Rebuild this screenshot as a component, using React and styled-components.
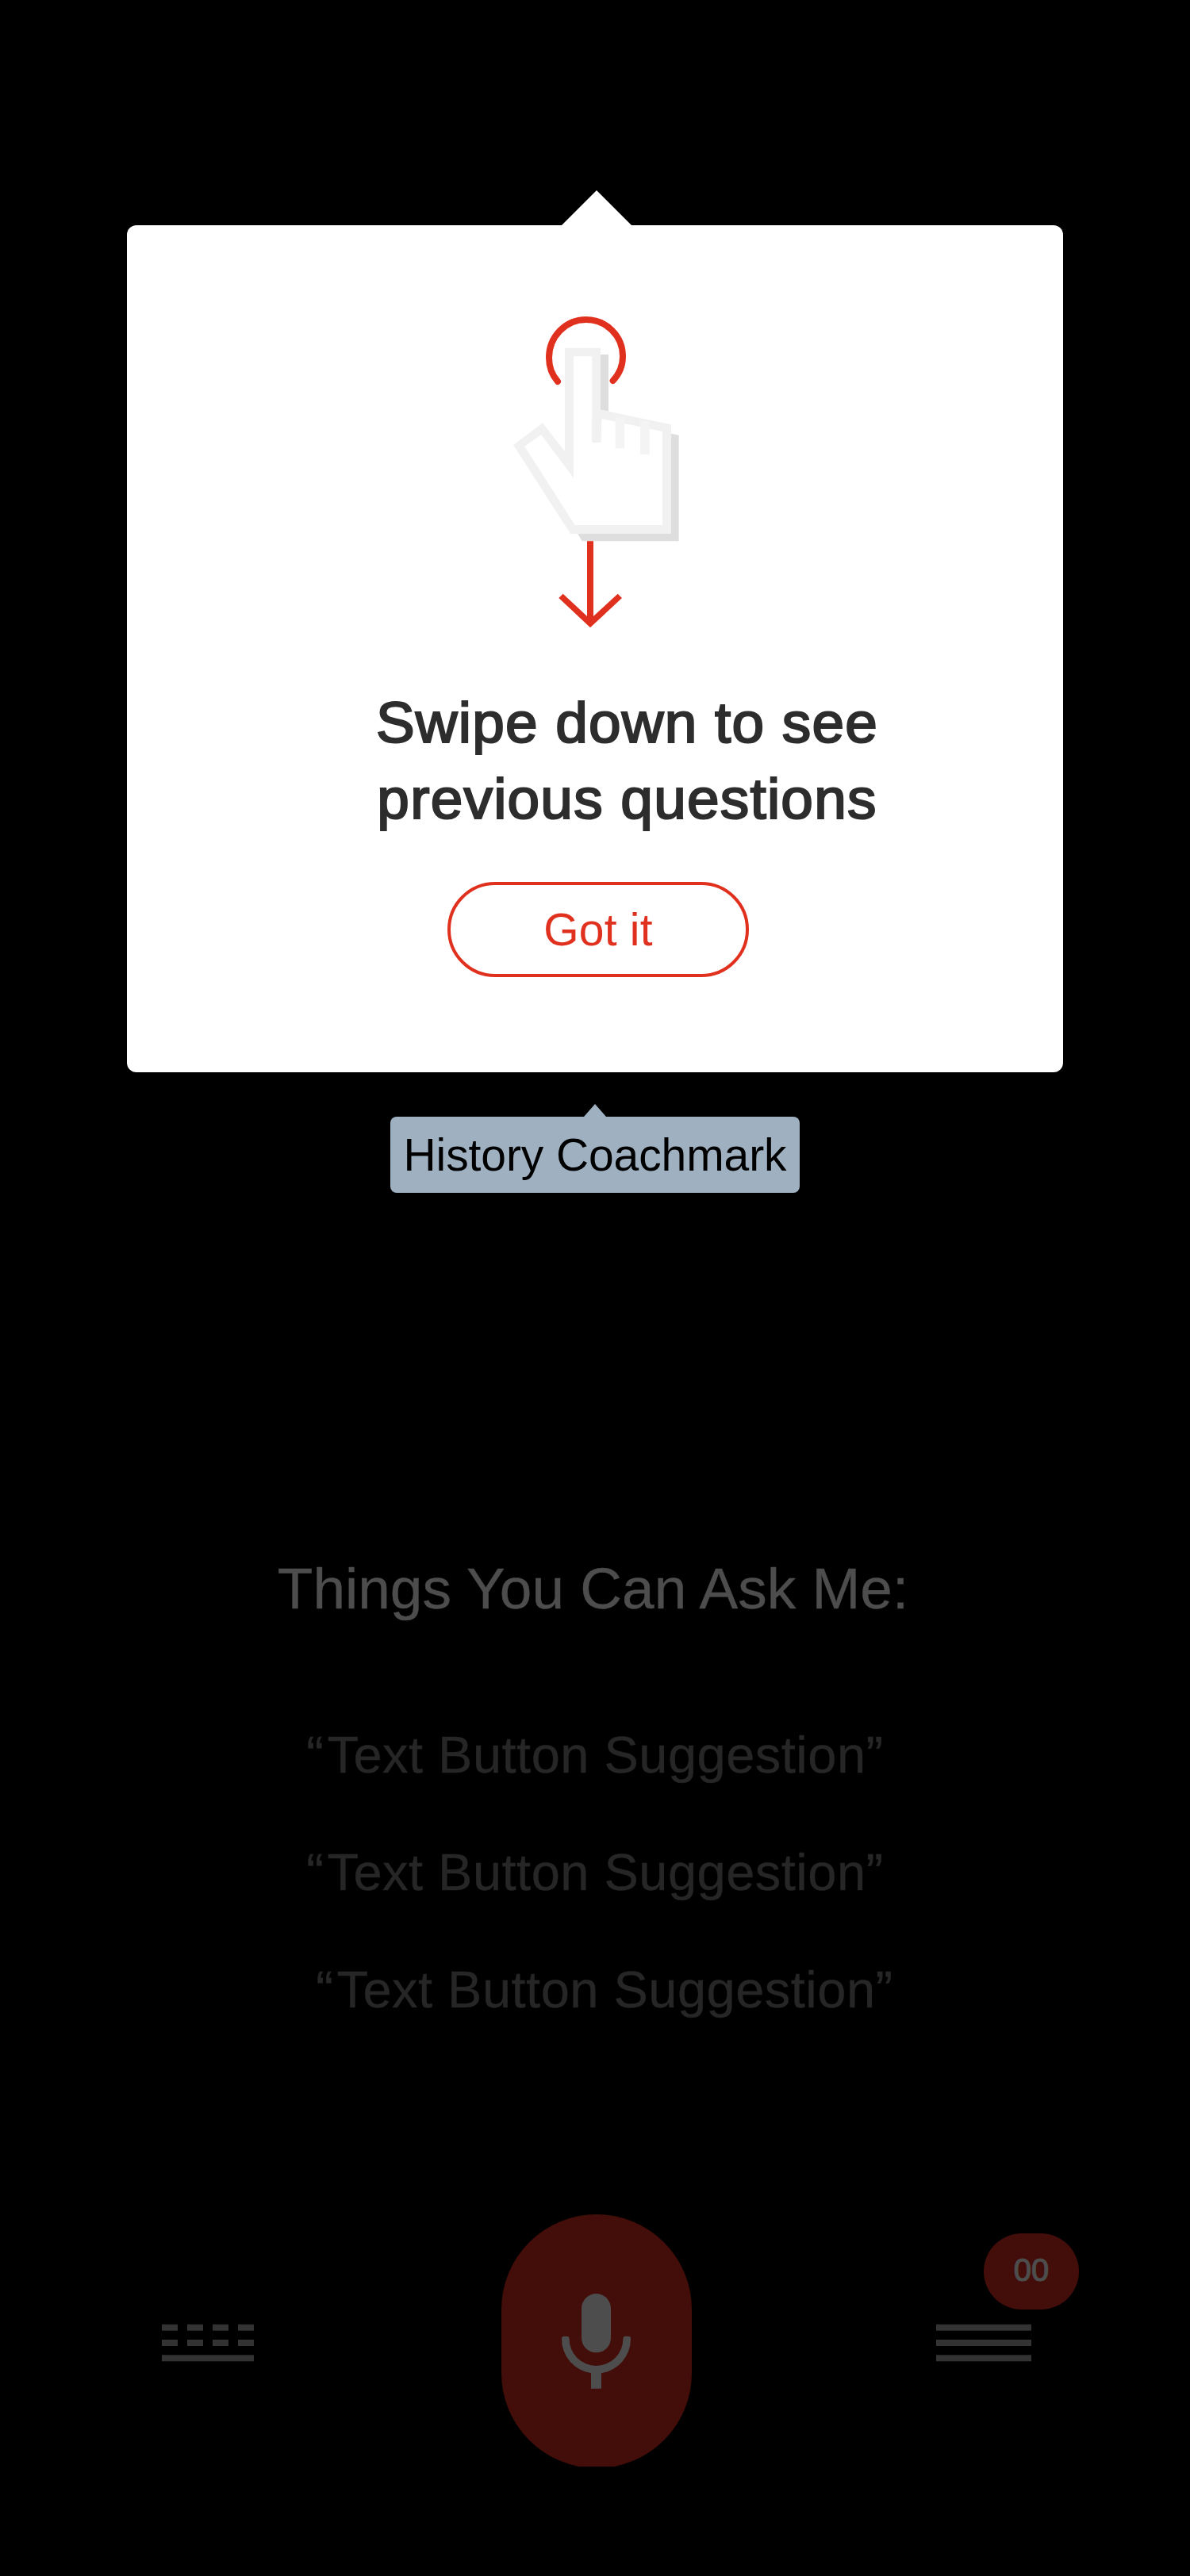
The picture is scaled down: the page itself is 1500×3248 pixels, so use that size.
import React from "react";
import styled, { createGlobalStyle } from "styled-components";

const red = "#e0301e";
const dimRed = "#430e09";

const GlobalStyle = createGlobalStyle`
  body { margin: 0; background: #000; }
  * { box-sizing: border-box; }
`;

const Screen = styled.main`
  width: 1500px;
  height: 3248px;
  padding-top: 240px;
  display: flex;
  flex-direction: column;
  align-items: center;
  background: #000;
  overflow: hidden;
  font-family: "Liberation Sans", Arial, sans-serif;
`;

const Pointer = styled.div`
  flex: none;
  width: ${(p) => p.$width}px;
  height: ${(p) => p.$height}px;
  margin-left: ${(p) => p.$shift || 0}px;
  background: ${(p) => p.$color};
  clip-path: polygon(50% 0, 100% 100%, 0 100%);
`;

const Card = styled.section`
  width: 1180px;
  height: 1068px;
  padding-top: 86px;
  margin-bottom: 40px;
  display: flex;
  flex-direction: column;
  align-items: center;
  background: #fff;
  border-radius: 12px;
`;

const Gesture = styled.svg`
  display: block;
  width: 300px;
  height: 440px;
`;

const Title = styled.h1`
  margin: 53px 0 57px 81px;
  font-size: 73px;
  font-weight: 400;
  line-height: 96px;
  letter-spacing: 1.2px;
  text-align: center;
  color: #2d2d2d;
  -webkit-text-stroke: 2.2px #2d2d2d;
`;

const GotIt = styled.button`
  width: 380px;
  height: 120px;
  margin-left: 8px;
  padding: 0;
  border: 4px solid ${red};
  border-radius: 60px;
  background: transparent;
  color: ${red};
  font-family: inherit;
  font-size: 57px;
  letter-spacing: 0.2px;
`;

const Label = styled.div`
  width: 516px;
  height: 96px;
  line-height: 96px;
  border-radius: 8px;
  background: #9fb1c1;
  color: #000;
  font-size: 57px;
  letter-spacing: -0.1px;
  text-align: center;
  white-space: nowrap;
`;

const Prompt = styled.h2`
  margin: 451px 5px 122px 0;
  font-size: 73px;
  font-weight: 400;
  line-height: 96px;
  color: #4d4d4d;
  white-space: nowrap;
  -webkit-text-stroke: 0.4px #4d4d4d;
`;

const Suggestions = styled.div`
  display: flex;
  flex-direction: column;
  align-items: center;
  gap: 68px;
  margin-bottom: 243px;
`;

const SuggestionLine = styled.div`
  padding-left: ${(p) => (p.$indented ? 24 : 0)}px;
  font-size: 65px;
  line-height: 80px;
  letter-spacing: 0.48px;
  color: #262626;
  white-space: nowrap;
  -webkit-text-stroke: 0.4px #262626;
`;

const OpenQuote = styled.span`
  margin-right: 4px;
`;

const Dock = styled.footer`
  align-self: stretch;
  display: flex;
  padding-left: 204px;
`;

const Keyboard = styled.svg`
  width: 116px;
  height: 60px;
  margin: 132px 312px 0 0;
`;

const MicButton = styled.div`
  width: 240px;
  height: 318.4px;
  margin-right: 308px;
  overflow: hidden;
`;

const MicPill = styled.div`
  height: 320px;
  border-radius: 120px;
  background: ${dimRed};
`;

const Menu = styled.div`
  position: relative;
  width: 120px;
  height: 320px;
  padding-top: 132px;
`;

const Lines = styled.svg`
  display: block;
  width: 120px;
  height: 60px;
`;

const Badge = styled.div`
  position: absolute;
  left: 60px;
  top: 24px;
  width: 120px;
  height: 96px;
  border-radius: 48px;
  background: ${dimRed};
  color: #4d4d4d;
  font-size: 40px;
  line-height: 93px;
  text-align: center;
  -webkit-text-stroke: 1.2px #4d4d4d;
`;

const rows = [6.7, 26, 45.3];

function Suggestion({ indented, children }) {
  return (
    <SuggestionLine $indented={indented}>
      <OpenQuote>“</OpenQuote>
      {children}”
    </SuggestionLine>
  );
}

export default function App() {
  return (
    <>
      <GlobalStyle />
      <Screen>
        <Pointer $width={88} $height={44} $shift={4} $color="#fff" />
        <Card>
          <Gesture viewBox="0 0 900 1320">
            <path
              d="M309 333C288 309 276 277 276 243C276 164 338 99 416 99C493 99 555 161 555 238C555 273 541 306 518 330"
              fill="none"
              stroke={red}
              strokeWidth="24"
              strokeLinecap="round"
            />
            <path d="M471 231H501V446L471 440ZM738 530L767 536V937H401L385 909H738Z" fill="#dedede" />
            <path d="M336 206H471V440L738 496V909H357L141 573L252 490L336 598Z" fill="#f1f1f1" />
            <path d="M369 238H439V563H472L475 474L705 522V876H374L184 579L246 534L369 698Z" fill="#fff" />
            <path d="M439 474H475L472 563H439Z" fill="#f1f1f1" />
            <path d="M527 466H561V586H527ZM621 482H656V609H621Z" fill="#f4f4f4" />
            <path d="M329 1136L420 1221V937H444V1221L536 1136L552 1152L432 1264L313 1152Z" fill={red} />
          </Gesture>
          <Title>
            Swipe down to see
            <br />
            previous questions
          </Title>
          <GotIt>Got it</GotIt>
        </Card>
        <Pointer $width={28} $height={16} $color="#9fb1c1" />
        <Label>History Coachmark</Label>
        <Prompt>Things You Can Ask Me:</Prompt>
        <Suggestions>
          <Suggestion>Text Button Suggestion</Suggestion>
          <Suggestion>Text Button Suggestion</Suggestion>
          <Suggestion indented>Text Button Suggestion</Suggestion>
        </Suggestions>
        <Dock>
          <Keyboard viewBox="0 0 116 60" fill="#333">
            {[0, 32, 64, 96].map((x) => (
              <React.Fragment key={x}>
                <rect x={x} y={rows[0]} width="20" height="8" />
                <rect x={x} y={rows[1]} width="20" height="8" />
              </React.Fragment>
            ))}
            <rect y={rows[2]} width="116" height="8" />
          </Keyboard>
          <MicButton>
            <MicPill>
              <svg width="240" height="320" viewBox="0 0 240 320" fill="#4d4d4d">
                <rect x="101" y="100" width="37" height="74.3" rx="18.5" />
                <path d="M76 157Q76 153.8 79 153.8H82.5Q85.6 153.8 85.6 157A33.9 33.9 0 0 0 153.4 157Q153.4 153.8 156.5 153.8H160Q163 153.8 163 157A43.5 43.5 0 0 1 126 200.2V219.7H113V200.2A43.5 43.5 0 0 1 76 157Z" />
              </svg>
            </MicPill>
          </MicButton>
          <Menu>
            <Lines viewBox="0 0 120 60" fill="#333">
              {rows.map((y) => (
                <rect key={y} y={y} width="120" height="8" />
              ))}
            </Lines>
            <Badge>00</Badge>
          </Menu>
        </Dock>
      </Screen>
    </>
  );
}
